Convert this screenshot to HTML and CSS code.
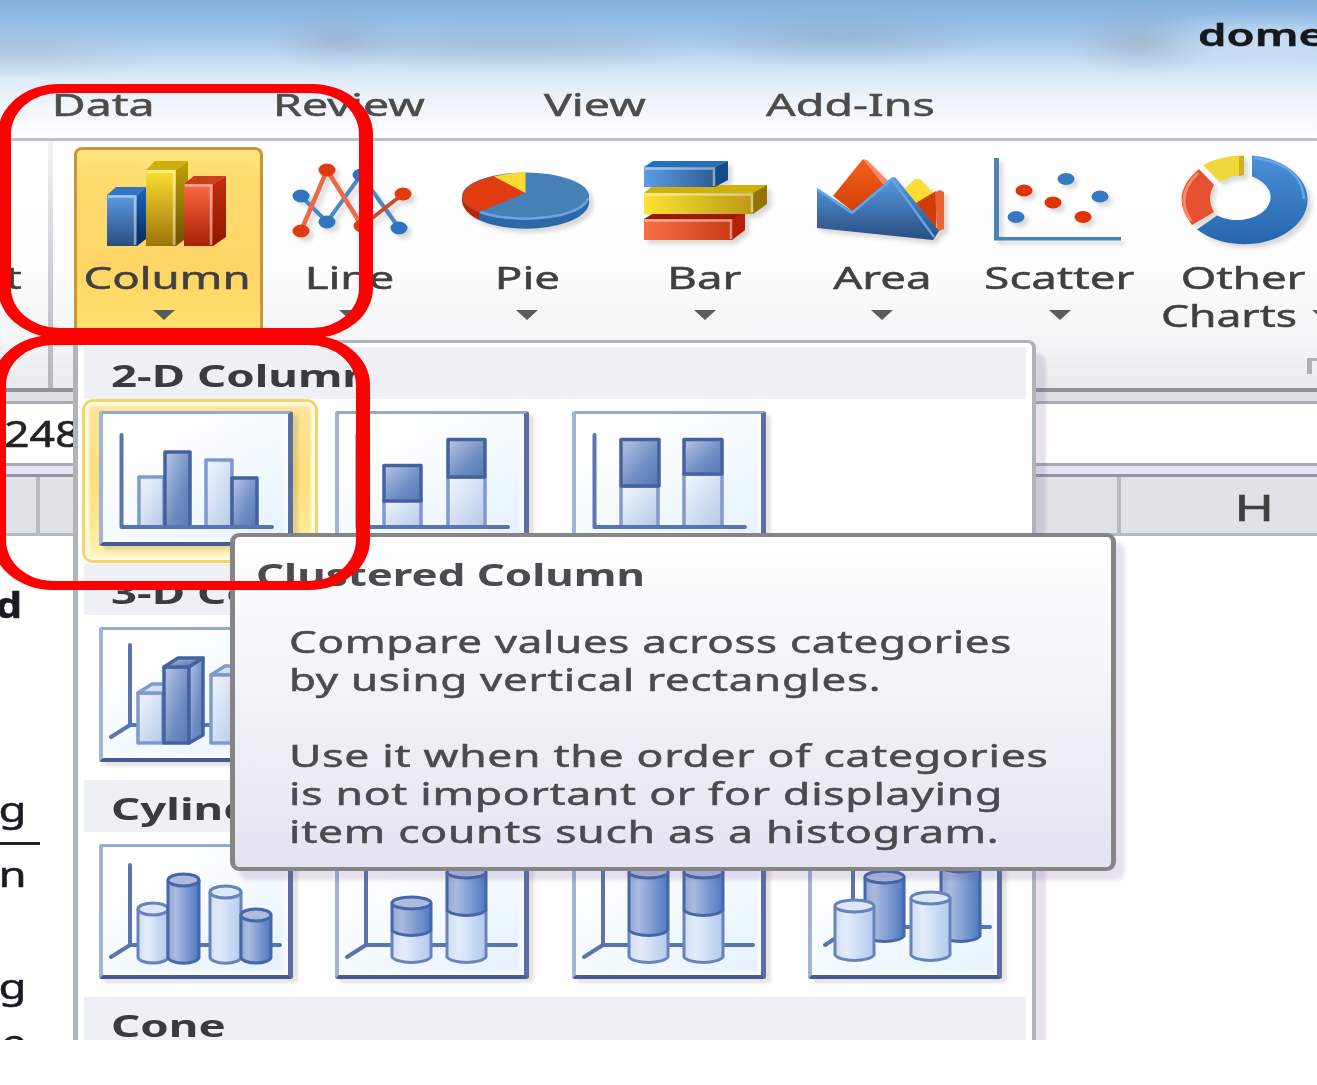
FILE: index.html
```html
<!DOCTYPE html>
<html lang="en">
<head>
<meta charset="utf-8">
<title>Insert Column Chart</title>
<link rel="stylesheet" href="styles.css">
</head>
<body>
<svg class="defs" width="0" height="0" aria-hidden="true">
  <defs>
    <linearGradient id="blueF" x1="0" y1="0" x2="0" y2="1"><stop offset="0" stop-color="#5b9ce2"/><stop offset="1" stop-color="#284d80"/></linearGradient>
    <linearGradient id="yelF" x1="0" y1="0" x2="0" y2="1"><stop offset="0" stop-color="#fde133"/><stop offset="1" stop-color="#9a7409"/></linearGradient>
    <linearGradient id="redF" x1="0" y1="0" x2="0" y2="1"><stop offset="0" stop-color="#fb6a45"/><stop offset="1" stop-color="#a82003"/></linearGradient>
    <linearGradient id="blueS" x1="0" y1="0" x2="0" y2="1"><stop offset="0" stop-color="#1b66c0"/><stop offset="1" stop-color="#062a5c"/></linearGradient>
    <linearGradient id="yelS" x1="0" y1="0" x2="0" y2="1"><stop offset="0" stop-color="#c0a305"/><stop offset="1" stop-color="#6b5200"/></linearGradient>
    <linearGradient id="redS" x1="0" y1="0" x2="0" y2="1"><stop offset="0" stop-color="#c52f0e"/><stop offset="1" stop-color="#8f1500"/></linearGradient>
    <linearGradient id="blueH"><stop offset="0" stop-color="#5c9de3"/><stop offset="1" stop-color="#2e5c96"/></linearGradient>
    <linearGradient id="yelH"><stop offset="0" stop-color="#ffe233"/><stop offset="1" stop-color="#bb9a14"/></linearGradient>
    <linearGradient id="redH"><stop offset="0" stop-color="#fa6e4a"/><stop offset="1" stop-color="#cc3a17"/></linearGradient>
    <linearGradient id="orange" x1="0" y1="0" x2="0" y2="1"><stop offset="0" stop-color="#f4601c"/><stop offset="1" stop-color="#cf3f04"/></linearGradient>
    <linearGradient id="ring" x1="0" y1="0" x2="0" y2="1"><stop offset="0" stop-color="#4a90d8"/><stop offset="1" stop-color="#2565ae"/></linearGradient>
    <linearGradient id="barDark" x1="0" y1="0" x2="1" y2="1"><stop offset="0" stop-color="#b9c7e6"/><stop offset=".6" stop-color="#6e8dc3"/><stop offset="1" stop-color="#5578b4"/></linearGradient>
    <linearGradient id="barLight" x1="0" y1="0" x2="1" y2="1"><stop offset="0" stop-color="#f3f7fe"/><stop offset="1" stop-color="#b4c9e8"/></linearGradient>
    <linearGradient id="cylDark"><stop offset="0" stop-color="#93a9d3"/><stop offset=".25" stop-color="#a9bbdf"/><stop offset="1" stop-color="#4f78c2"/></linearGradient>
    <linearGradient id="cylLight"><stop offset="0" stop-color="#d0ddf3"/><stop offset=".3" stop-color="#e3ecf9"/><stop offset="1" stop-color="#b3c9ee"/></linearGradient>
  </defs>
</svg>

<div class="app">
  <header class="titlebar">
    <div class="document-name"><span class="t">dome</span></div>
    <nav class="tabs">
      <div class="tab"><span class="t">Data</span></div>
      <div class="tab"><span class="t">Review</span></div>
      <div class="tab"><span class="t">View</span></div>
      <div class="tab"><span class="t">Add-Ins</span></div>
    </nav>
  </header>

  <section class="ribbon">
    <div class="previous-group"><span class="t">t</span></div>
    <div class="group-line"></div>
    <div class="button column selected">
      <svg class="icon" viewBox="102 150 130 100">
        <path fill="#2f77c6" d="M107 195l9-8h30l-9 8z"/><path fill="url(#blueF)" d="M107 195h30v51h-30z"/><path fill="url(#blueS)" d="M137 195l9-8v52l-9 7z"/><path class="edge" d="M108 196.500h27V245"/>
        <path fill="#cfae10" d="M146 170l9-9h33l-12 9z"/><path fill="url(#yelF)" d="M146 170h30v76h-30z"/><path fill="url(#yelS)" d="M176 170l12-9v76l-12 9z"/><path class="edge" d="M147 171.500h27V245"/>
        <path fill="#c9401f" d="M184 184l10-8h32l-13 8z"/><path fill="url(#redF)" d="M184 184h29v62h-29z"/><path fill="url(#redS)" d="M213 184l13-8v61l-13 9z"/><path class="edge" d="M185 185.500h26V245"/>
      </svg>
      <div class="caption"><span class="t">Column</span></div>
      <svg class="arrow" viewBox="0 0 22 10"><path d="M0 0h22L11 10z"/></svg>
    </div>
    <div class="button">
      <svg class="icon shade" viewBox="285 150 130 100">
        <path fill="none" stroke="#4a88c8" stroke-width="4" d="M301 196l26 26 34-47 38 53"/>
        <path fill="none" stroke="#ee6946" stroke-width="4.500" d="M301 231l26-61 35 56"/><path stroke="#d04a28" stroke-width="4" d="M362 226l41-32"/>
        <g fill="#2f74be"><ellipse cx="301" cy="196" rx="8.500" ry="6.500"/><ellipse cx="327" cy="222" rx="8.500" ry="6.500"/><ellipse cx="361" cy="175" rx="8.500" ry="6.500"/><ellipse cx="399" cy="228" rx="8.500" ry="6.500"/></g>
        <g fill="#e03a10"><ellipse cx="301" cy="231" rx="8.500" ry="6.500"/><ellipse cx="327" cy="170" rx="8.500" ry="6.500"/><ellipse cx="362" cy="226" rx="8.500" ry="6.500"/><ellipse cx="403" cy="194" rx="8.500" ry="6.500"/></g>
      </svg>
      <div class="caption"><span class="t">Line</span></div>
      <svg class="arrow" viewBox="0 0 22 10"><path d="M0 0h22L11 10z"/></svg>
    </div>
    <div class="button">
      <svg class="icon shade" viewBox="462 150 130 100">
        <path fill="#2e67a5" d="M479 211L525 196H589v6a63 26 0 0 1-110 18z"/>
        <path fill="#b52607" d="M462 196v5q1 11 17 19v-9z"/>
        <ellipse cx="525.500" cy="196" rx="63.500" ry="23.500" fill="#4780b8"/>
        <path fill="none" stroke="#6aa5df" stroke-width="2.500" d="M588 198a63 22 0 0 1-108 14"/>
        <path fill="#e23b10" d="M525 193L479 212A63.500 23.500 0 0 1 494 176z"/>
        <path fill="#fbd92d" d="M525.500 193V172.500a63 23.500 0 0 0-31.500 4z"/>
      </svg>
      <div class="caption"><span class="t">Pie</span></div>
      <svg class="arrow" viewBox="0 0 22 10"><path d="M0 0h22L11 10z"/></svg>
    </div>
    <div class="button">
      <svg class="icon shade" viewBox="640 150 130 100">
        <path fill="#9d1800" d="M644 219l10-6h91l-12 6z"/><path fill="url(#redH)" d="M644 219h88v21h-88z"/><path fill="#b52105" d="M732 219l13-7v18l-13 10z"/><path class="edge" d="M645 220.500h86V239"/>
        <path fill="#d0b00b" d="M644 193l10-8h113l-14 8z"/><path fill="url(#yelH)" d="M644 193h109v21H644z"/><path fill="#927500" d="M753 193l14-8v19l-14 10z"/><path class="edge" d="M645 194.500h107V212"/>
        <path fill="#2370bd" d="M644 167l9-6h75l-13 6z"/><path fill="url(#blueH)" d="M644 167h71v20h-71z"/><path fill="#174a8b" d="M715 167l13-6v19l-13 7z"/><path class="edge" d="M645 168.500h69V186"/>
      </svg>
      <div class="caption"><span class="t">Bar</span></div>
      <svg class="arrow" viewBox="0 0 22 10"><path d="M0 0h22L11 10z"/></svg>
    </div>
    <div class="button">
      <svg class="icon shade" viewBox="817 150 130 100">
        <path fill="url(#orange)" d="M833 196l30-37 29 32-32 26z"/><path fill="#f08a68" d="M863 159l4 1 25 25-4 6z"/>
        <path fill="#fbdc35" d="M904 189l11-10h5l13 14-15 12z"/>
        <path fill="#cf3d08" d="M916 203l20-12v37l2 4z"/><path fill="#e96435" d="M935 192l5-2 4 2v37l-7 3z"/>
        <path fill="url(#blueF)" d="M817 188l35 23 39-33 4-1 44 54-6 9-116-12z"/>
        <path fill="none" stroke="#62a4e8" stroke-width="2.500" d="M818 190l34 23 40-34 42 58"/>
      </svg>
      <div class="caption"><span class="t">Area</span></div>
      <svg class="arrow" viewBox="0 0 22 10"><path d="M0 0h22L11 10z"/></svg>
    </div>
    <div class="button">
      <svg class="icon shade" viewBox="995 150 130 100">
        <path fill="#4c80b9" d="M994 158h5v79h122v3.500H994z"/>
        <g fill="#de3507"><ellipse cx="1024" cy="190.500" rx="8.500" ry="6"/><ellipse cx="1053" cy="202.500" rx="8.500" ry="6"/><ellipse cx="1083" cy="217" rx="8.500" ry="6"/></g>
        <g fill="#3579c5"><ellipse cx="1066" cy="179" rx="8.500" ry="6"/><ellipse cx="1100" cy="196.500" rx="8.500" ry="6"/><ellipse cx="1016" cy="217" rx="8.500" ry="6"/></g>
      </svg>
      <div class="caption"><span class="t">Scatter</span></div>
      <svg class="arrow" viewBox="0 0 22 10"><path d="M0 0h22L11 10z"/></svg>
    </div>
    <div class="button other">
      <svg class="icon shade" viewBox="1179 150 130 100">
        <path fill="url(#ring)" d="M1252 155.500A63.500 44.500 0 1 1 1197 229.500l20-14A33.500 23 0 1 0 1252 176.500z"/>
        <path fill="none" stroke="#68a6e4" stroke-width="2.500" d="M1254 158q48 6 50 41"/>
        <path fill="#e5512e" d="M1199 169l15 16q-8 13 0 27l-22 13q-24-30 7-56z"/><path fill="none" stroke="#fb8a6b" stroke-width="3" d="M1198 173q-24 23-7 48"/>
        <path fill="#f1d83a" d="M1203 165q19-10 41-9.500V175q-13 0-24 7z"/><path fill="#cdb41c" d="M1239 156h5v19l-5 1z"/>
      </svg>
      <div class="caption"><span class="t">Other</span></div>
      <div class="caption second"><span class="t">Charts</span><svg class="arrow" viewBox="0 0 22 10"><path d="M0 0h22L11 10z"/></svg></div>
      <div class="launcher"></div>
    </div>
  </section>

  <div class="divider"></div>
  <div class="formula"><span class="t">248</span></div>
  <div class="divider lavender"></div>
  <div class="sheet-columns">
    <div class="col-a"></div><div class="col-b"></div><div class="col-h"><span class="t">H</span></div>
  </div>
  <div class="sheet">
    <div class="cell bold"><span class="t">d</span></div>
    <div class="cell total"><span class="t">g</span></div>
    <div class="cell mean"><span class="t">n</span></div>
    <div class="cell next"><span class="t">g</span></div>
    <div class="cell last"><span class="t">e</span></div>
  </div>

  <div class="gallery">
    <div class="heading"><span class="t">2-D Column</span></div>
    <div class="tiles">
      <div class="tile chosen"><svg viewBox="0 0 194 135">
        <g class="light"><path d="M40 116V66h25v50z"/><path d="M107 116V49h26v67z"/></g><g class="dark"><path d="M66 116V41h25v75z"/><path d="M133 116V67h25v49z"/></g><path class="axis" d="M22.500 24v92H173"/></svg></div>
      <div class="tile"><svg viewBox="0 0 194 135">
        <g class="light"><path d="M49 116V88h37v28z"/><path d="M113 116V66h37v50z"/></g><g class="dark"><path d="M49 54.500h37V90H49z"/><path d="M113 28.500h37V66h-37z"/></g><path class="axis" d="M22.500 24v92H173"/></svg></div>
      <div class="tile"><svg viewBox="0 0 194 135">
        <g class="light"><path d="M49 116V75h37v41z"/><path d="M112 116V63h38v53z"/></g><g class="dark"><path d="M49 28.500h38V75H49z"/><path d="M112 28.500h38V63h-38z"/></g><path class="axis" d="M22.500 24v92H173"/></svg></div>
    </div>
    <div class="heading"><span class="t">3-D Column</span></div>
    <div class="tiles">
      <div class="tile"><svg viewBox="0 0 194 135">
        <path class="axis" d="M31 18v80L12 110M31 98H181"/>
        <g class="light"><path d="M39 116V66h25v50z"/><path d="M39 66l14-9h25l-14 9zM112 48l14-9h25l-14 9z"/><path d="M112 116V48h25v68z"/></g>
        <g class="dark"><path d="M65 116V40h25v76z"/><path d="M65 40l14-9h25L90 40z"/><path d="M90 40l14-9v77l-14 8z"/></g></svg></div>
    </div>
    <div class="heading"><span class="t">Cylinder</span></div>
    <div class="tiles cylinders">
      <div class="tile"><svg viewBox="0 0 194 135">
        <path class="axis" d="M31 21v80L12 113M31 101H181"/>
        <g class="light"><path d="M39 65v48a15 6 0 0 0 30 0V65"/><ellipse cx="54" cy="65" rx="15" ry="6"/><path d="M111 48v65a15 6 0 0 0 31 0V48"/><ellipse cx="126.500" cy="48" rx="15.500" ry="6"/></g>
        <g class="dark"><path d="M69 36v77a15 6 0 0 0 31 0V36"/><ellipse cx="84.500" cy="36" rx="15.500" ry="6"/><path d="M142 71v42a15 6 0 0 0 30 0V71"/><ellipse cx="157" cy="71" rx="15" ry="6"/></g></svg></div>
      <div class="tile"><svg viewBox="0 0 194 135">
        <path class="axis" d="M31 21v80L12 113M31 101H181"/>
        <g class="light"><path d="M57 86v27a20 7 0 0 0 39 0V86"/><path d="M112 66v47a20 7 0 0 0 39 0V66"/></g>
        <g class="dark"><path d="M57 59v27a20 7 0 0 0 39 0V59"/><ellipse cx="76.500" cy="59" rx="19.500" ry="6"/><path d="M112 28v38a20 7 0 0 0 39 0V28"/><ellipse cx="131.500" cy="28" rx="19.500" ry="6"/></g></svg></div>
      <div class="tile"><svg viewBox="0 0 194 135">
        <path class="axis" d="M31 21v80L12 113M31 101H181"/>
        <g class="light"><path d="M57 86v27a20 7 0 0 0 39 0V86"/><path d="M112 66v47a20 7 0 0 0 39 0V66"/></g>
        <g class="dark"><path d="M57 28v58a20 7 0 0 0 39 0V28"/><ellipse cx="76.500" cy="28" rx="19.500" ry="6"/><path d="M112 28v38a20 7 0 0 0 39 0V28"/><ellipse cx="131.500" cy="28" rx="19.500" ry="6"/></g></svg></div>
      <div class="tile"><svg viewBox="0 0 194 135">
        <path class="axis" d="M45 15v68L17 101M45 83H182"/>
        <g class="dark"><path d="M57 33v59a20 7 0 0 0 39 0V33"/><ellipse cx="76.500" cy="33" rx="19.500" ry="6"/><path d="M133 22v70a20 7 0 0 0 39 0V22"/><ellipse cx="152.500" cy="22" rx="19.500" ry="6"/></g>
        <g class="light"><path d="M27 62v49a20 7 0 0 0 39 0V62"/><ellipse cx="46.500" cy="62" rx="19.500" ry="6"/><path d="M103 54v57a20 7 0 0 0 39 0V54"/><ellipse cx="122.500" cy="54" rx="19.500" ry="6"/></g></svg></div>
    </div>
    <div class="heading"><span class="t">Cone</span></div>
  </div>

  <div class="tooltip">
    <h2><span class="t">Clustered Column</span></h2>
    <p><span class="t">Compare values across categories<br>by using vertical rectangles.</span></p>
    <p><span class="t">Use it when the order of categories<br>is not important or for displaying<br>item counts such as a histogram.</span></p>
  </div>

  <div class="mark mark-button"></div>
  <div class="mark mark-tile"></div>
</div>
</body>
</html>
```
FILE: styles.css
```css
* { box-sizing: border-box; }

body {
  margin: 0;
  background: #fff;
  color: #404040;
  font: 30px/38px "Noto Sans", "Open Sans", sans-serif;
}

.defs { display: block; }

.app {
  position: relative;
  width: 1317px;
  height: 1040px;
  overflow: hidden;
}

/* wide lettering */
.t {
  display: inline-block;
  white-space: nowrap;
  transform: scaleX(1.52);
  -webkit-text-stroke: .5px;
}

.titlebar {
  height: 141px;
  border-bottom: 3px solid #bcc1c7;
  background:
    radial-gradient(ellipse 70px 30px at 335px 40px, rgba(140, 155, 170, .38), rgba(140, 155, 170, .14) 55%, transparent),
    radial-gradient(ellipse 160px 28px at 10px 52px, rgba(150, 165, 180, .3), rgba(150, 165, 180, .1) 60%, transparent),
    radial-gradient(ellipse 200px 26px at 510px 46px, rgba(140, 160, 180, .3), rgba(140, 160, 180, .15) 60%, transparent),
    radial-gradient(ellipse 160px 30px at 840px 38px, rgba(125, 150, 175, .35), rgba(125, 150, 175, .14) 60%, transparent),
    radial-gradient(ellipse 75px 34px at 1140px 42px, rgba(140, 155, 170, .42), rgba(140, 155, 170, .16) 55%, transparent),
    radial-gradient(ellipse 160px 30px at 1270px 40px, rgba(225, 235, 245, .6), transparent),
    linear-gradient(#83b0dc 0, #8fbae6 18px, #a9caed 40px, #c3dbf4 60px, #deebfa 80px, #eef4fc 102px, #f7f9fd 120px, #fdfdff 138px);
}

.document-name {
  height: 86px;
  padding: 16px 0 0 1198px;
  color: #15191e;
  font-weight: 600;
}
.document-name .t { transform-origin: left; }

.tabs {
  display: grid;
  grid-template-columns: 246px 246px 246px 264px;
  margin-left: -20px;
  text-align: center;
  color: #4c4c4c;
}
.tab .t { transform: scaleX(1.55); }

.ribbon {
  display: flex;
  height: 247px;
  background: linear-gradient(#fff 0, #fdfdfd 50%, #f4f5f6 80%, #e8eaef 100%);
}

.previous-group {
  flex: none;
  width: 48px;
  padding: 118px 0 0 8px;
}

.group-line {
  flex: none;
  width: 5px;
  margin-right: 21px;
  background: linear-gradient(#f2f3f5, #d5d8dc 40%, #b3b7bd);
}

.button {
  display: flex;
  flex: none;
  flex-direction: column;
  align-items: center;
  width: 177.5px;
  padding-top: 9px;
}
.button.column {
  width: 189px;
  height: 200px;
  margin: 6px -2px 0 0;
  padding: 0 3px 0 0;
  border: 3px solid #cb9638;
  border-bottom: 0;
  border-radius: 8px 8px 0 0;
  background: linear-gradient(#ffe57b 0, #ffdb70 15%, #ffd566 60%, #ffdf6c 85%, #ffee7d 100%);
}
.button.column .arrow { margin-right: 6px; }
.button.other { width: 190px; }

.icon {
  flex: none;
  width: 130px;
  height: 100px;
  overflow: visible;
}
.shade { filter: drop-shadow(4px 4px 2px rgba(80, 80, 80, .22)); }
.edge { fill: none; stroke: rgba(255, 255, 255, .45); stroke-width: 2.5; }

.caption { margin-top: 9px; height: 38px; }
.arrow { flex: none; width: 22px; height: 10px; margin-top: 13px; fill: #5a5b5d; }
.second {
  display: flex;
  align-self: flex-start;
  gap: 38px;
  margin-top: 0;
  padding-left: 34px;
}
.second .t { transform: scaleX(1.48); }
.launcher {
  align-self: flex-end;
  width: 32px;
  height: 16px;
  margin-top: 23px;
  border: 4px solid #afb1b4;
  border-width: 3px 0 0 5px;
}

.divider {
  height: 16px;
  border: solid #8f949b;
  border-width: 4px 0 3px;
  border-bottom-color: #a8acb2;
  background: #dee1e6;
}
.divider.lavender {
  height: 14px;
  border-width: 3px 0;
  border-top-color: #a8acb2;
  border-bottom-color: #94979b;
  background: #e4e5f6;
}

.formula {
  height: 59px;
  padding: 11px 0 0 4px;
  font-size: 36px;
  color: #222;
}
.formula .t { transform: scaleX(1.24); transform-origin: left; }

.sheet-columns {
  display: flex;
  height: 59px;
  border-bottom: 3px solid #b7bbc1;
  background: #dfe2e7;
  font-size: 36px;
  text-align: center;
}
.sheet-columns > div { flex: none; border-right: 4px solid #b7bbc0; }
.col-a { width: 40px; }
.col-b { width: 1081px; }
.sheet-columns .col-h { width: 270px; padding-top: 12px; }
.sheet-columns .col-h .t { transform: scaleX(1.5); }

.sheet {
  display: flex;
  flex-direction: column;
  width: 40px;
  color: #1b1b24;
  font-size: 35px;
}
.cell {
  display: flex;
  flex: none;
  justify-content: flex-end;
  height: 38px;
  padding-right: 13px;
}
.cell .t { transform: scaleX(1.3); transform-origin: right; }
.cell.bold { margin-top: 50px; padding-right: 18px; font-weight: 700; }
.cell.bold .t { transform: scaleX(1.2); }
.cell.total { height: 55px; margin-top: 166px; border-bottom: 3px solid #222; }
.cell.mean { margin-top: 10px; }
.cell.next { margin-top: 74px; }
.cell.last { margin-top: 18px; }

.gallery {
  position: absolute;
  left: 73px;
  top: 340px;
  width: 963px;
  height: 720px;
  padding: 4px 6px 0;
  border: solid #afb4bb;
  border-width: 3px 4px 0 5px;
  border-radius: 0 8px 0 0;
  background: #fff;
  box-shadow: 10px 14px 3px rgba(110, 85, 150, .17);
  isolation: isolate;
}

.heading {
  height: 51.5px;
  padding: 10px 0 0 27px;
  background: #eff0f5;
  color: #383b42;
  font-weight: 700;
}
.heading .t { transform-origin: left; transform: scaleX(1.52); -webkit-text-stroke: 0; }

.tiles {
  display: flex;
  gap: 42.4px;
  height: 165px;
  padding: 12px 15px 0;
}

.tile {
  position: relative;
  flex: none;
  width: 194px;
  height: 135px;
  border-style: solid;
  border-width: 3px 5px 4px 4px;
  border-color: #93abd1 #5a6ea4 #465b94 #a0b4d4;
  border-radius: 3px;
  background: linear-gradient(150deg, #fff 20%, #f3faff 55%, #e4f1ff);
  box-shadow: inset -4px -4px 3px rgba(255, 255, 255, .7), 5px 4px 3px rgba(100, 90, 70, .16);
}
.tile svg { display: block; width: 194px; height: 135px; margin: -3px 0 0 -4px; }

/* highlight ring drawn behind the hovered thumbnail */
.chosen::before {
  content: "";
  position: absolute;
  z-index: -1;
  inset: -15px -30px -21px -21px;
  border: 3px solid #f6d568;
  border-radius: 11px;
  background: linear-gradient(#fbe59a, #fddf7c 50%, #fde995 80%, #fff3b8);
  box-shadow: inset 0 0 3px 4px #fffbe6;
}

.axis { fill: none; stroke: #5a74ae; stroke-width: 4; stroke-linecap: round; stroke-linejoin: round; }
.light { fill: url(#barLight); stroke: #7f9ad0; stroke-width: 3.5; stroke-linejoin: round; }
.dark { fill: url(#barDark); stroke: #45629f; stroke-width: 3.5; stroke-linejoin: round; }
.cylinders .light { fill: url(#cylLight); stroke: #6883bb; stroke-width: 3; }
.cylinders .dark { fill: url(#cylDark); stroke: #4566a8; stroke-width: 3; }
.cylinders .dark ellipse { fill: #adbcdd; }
.cylinders .light ellipse { fill: #dce7f7; }

.tooltip {
  position: absolute;
  left: 230px;
  top: 533px;
  width: 886px;
  height: 338px;
  padding: 19px 21px;
  border: solid #858585;
  border-width: 4px 5px;
  border-radius: 9px;
  background: linear-gradient(#fff, #f7f7fa 30%, #e3e4f0);
  box-shadow: 9px 9px 4px rgba(110, 85, 150, .18);
  color: #4c4a4e;
}
.tooltip .t { transform-origin: left; }
.tooltip h2 { margin: 0; font-size: 30px; line-height: 38px; font-weight: 700; }
.tooltip h2 .t { transform: scaleX(1.46); -webkit-text-stroke: 0; }
.tooltip p { margin: 29px 0 0 33px; }
.tooltip p + p { margin-top: 38px; }
.tooltip p .t { transform: scaleX(1.46); letter-spacing: .5px; }
.tooltip p + p .t { transform: scaleX(1.48); }

/* hand-drawn callouts */
.mark {
  position: absolute;
  border: solid #f00;
}
.mark-button {
  left: -2px;
  top: 84px;
  width: 375px;
  height: 254px;
  border-width: 9px 14px 10px 13px;
  border-radius: 61px / 50px;
}
.mark-tile {
  left: -8px;
  top: 335px;
  width: 378px;
  height: 255px;
  border-width: 10px 14px 9px 14px;
  border-radius: 61px / 50px;
}
```
